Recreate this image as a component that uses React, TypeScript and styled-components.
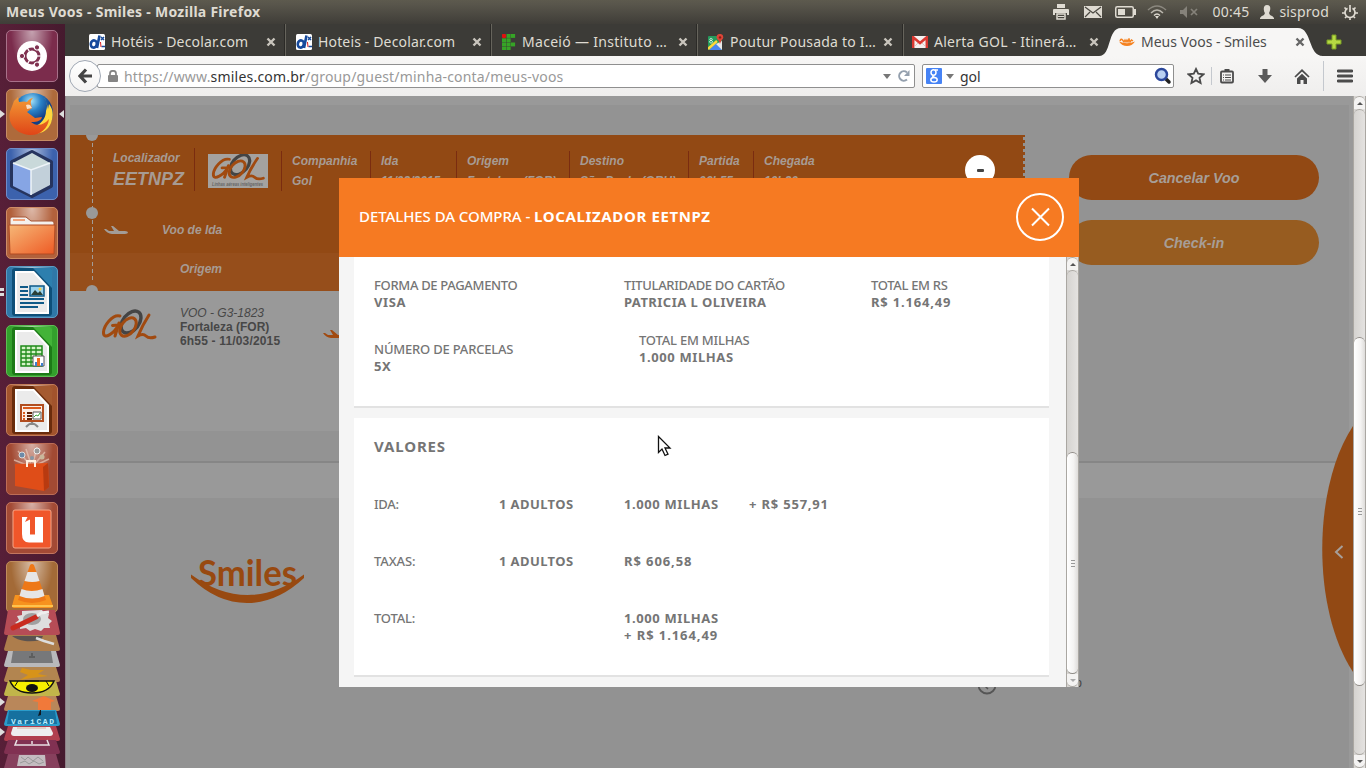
import React from "react";
import styled, { createGlobalStyle, css } from "styled-components";

const Global = createGlobalStyle`
  * { box-sizing: border-box; }
  body { margin: 0; overflow: hidden; }
  svg { display: block; flex: none; }
`;

const Desktop = styled.div`
  position: relative;
  width: 1366px;
  height: 768px;
  display: flex;
  flex-direction: column;
  overflow: hidden;
  background: #4d1b31;
  font-family: "Noto Sans", "Open Sans", sans-serif;
  white-space: nowrap;
`;

/* ---------- system panel ---------- */
const Panel = styled.header`
  height: 24px;
  flex: none;
  display: flex;
  align-items: center;
  padding: 0 8px 1px 6px;
  background: linear-gradient(#5d5a4e, #58554b 20%, #3f3d38);
  color: #dfdbd2;
  font-size: 14px;
`;
const PanelTitle = styled.span`
  flex: 1;
  padding-bottom: 1px;
  font-weight: 700;
  letter-spacing: 0.27px;
`;
const PanelIcon = styled.span<{ $gap: number }>`margin-right: ${p => p.$gap}px;`;
const PanelText = styled.span<{ $gap: number }>`
  margin-right: ${p => p.$gap}px;
  padding-bottom: 1px;
  letter-spacing: 0.2px;
`;

const Body = styled.div`
  flex: 1;
  display: flex;
  min-height: 0;
`;

/* ---------- launcher ---------- */
const Launcher = styled.nav`
  width: 65px;
  flex: none;
  display: flex;
  flex-direction: column;
  padding: 6px 0 0;
  background: linear-gradient(90deg, #571f38, #4d1b31 70%, #451a2e);
  overflow: hidden;
`;
const Tile = styled.div<{ $bg: string; $edge: string }>`
  position: relative;
  width: 52px;
  height: 52px;
  flex: none;
  margin: 0 0 7px 6px;
  border-radius: 5px;
  border: 1px solid ${p => p.$edge};
  background: radial-gradient(ellipse at 50% 0, #ffffff90, #ffffff00 60%), ${p => p.$bg};
`;
const TileSvg = styled.svg`margin: -1px;`;
const Arrow = styled.i<{ $side: "left" | "right" }>`
  position: absolute;
  top: 20px;
  ${p => (p.$side === "left" ? "left: -7px;" : "right: -7px;")}
  border: solid transparent;
  border-width: 4px 0;
  ${p => p.$side === "left" ? "border-left: 5px solid #ddd;" : "border-right: 5px solid #ddd;"}
`;
const DoubleMark = styled.i`
  position: absolute;
  left: -7px;
  top: 21px;
  width: 4px;
  height: 8px;
  border: solid #ddd;
  border-width: 3px 0;
`;
const FoldedStack = styled.div`
  position: relative;
  margin-top: -12px;
  flex: none;
`;

/* ---------- browser ---------- */
const Browser = styled.main`
  flex: 1;
  min-width: 0;
  display: flex;
  flex-direction: column;
`;
const TabStrip = styled.div`
  height: 32px;
  flex: none;
  display: flex;
  padding-left: 14px;
  background: #3c3b37;
`;
const Tab = styled.div<{ $w: number }>`
  position: relative;
  width: ${p => p.$w}px;
  height: 32px;
  display: flex;
  align-items: center;
  padding: 4px 0 0 10px;
  gap: 6px;
  color: #dfdbd2;
  font-size: 14px;
  border-right: 1px solid #66645c;
  box-shadow: inset -1px 0 #2b2a27;
`;
const LastTab = styled(Tab)`
  padding-left: 8px;
  border: 0;
  box-shadow: none;
`;
const ActiveTab = styled(Tab)`
  padding-left: 20px;
  border: 0;
  box-shadow: none;
  color: #4c4c4c;
`;
const TabShape = styled.svg`
  position: absolute;
  left: 0;
  top: 0;
`;
const TabLabel = styled.span<{ $ls: number }>`
  position: relative;
  flex: 1;
  line-height: 20px;
  letter-spacing: ${p => p.$ls}px;
`;
const TabIcon = styled.svg`position: relative;`;
const TabClose = styled.svg<{ $right?: number }>`
  position: relative;
  margin-right: ${p => p.$right ?? 9}px;
`;
const AddTab = styled.svg`margin: 10px 0 0 1px;`;
const Toolbar = styled.div`
  height: 40px;
  flex: none;
  display: flex;
  align-items: center;
  background: linear-gradient(#f7f6f5, #efeeed);
  color: #4c4c4c;
  font-size: 14px;
`;
const BackButton = styled.button`
  position: relative;
  z-index: 1;
  width: 32px;
  height: 32px;
  flex: none;
  display: grid;
  place-items: center;
  margin-left: 4px;
  padding: 0;
  border: 1px solid #a0a8b4;
  border-radius: 50%;
  background: linear-gradient(#fff, #f4f3f2);
`;
const Field = styled.div<{ $w: number; $pad: number; $left: number }>`
  width: ${p => p.$w}px;
  height: 24px;
  display: flex;
  align-items: center;
  margin-left: ${p => p.$left}px;
  padding-left: ${p => p.$pad}px;
  border: 1px solid #8f8f8f;
  border-radius: 2px;
  background: #fff;
`;
const Url = styled.span`
  flex: 1;
  margin-left: 6px;
  color: #999;
  letter-spacing: 0.18px;
  b { color: #333; font-weight: 400; letter-spacing: 0.2px; }
`;
const Query = styled.span`flex: 1; margin-left: 6px; color: #333;`;
const Tools = styled.div`
  flex: 1;
  display: flex;
  align-items: center;
  padding-left: 13px;
`;
const Rule = styled.i<{ $h: number; $l: number; $r: number }>`
  width: 1px;
  height: ${p => p.$h}px;
  margin: 0 ${p => p.$r}px 0 ${p => p.$l}px;
  background: #c4c8ce;
`;
const Spacer = styled.i<{ $w: number }>`width: ${p => p.$w}px;`;

/* ---------- page ---------- */
const Viewport = styled.div`
  flex: 1;
  display: flex;
  min-height: 0;
`;
const Page = styled.div`
  position: relative;
  width: 1288px;
  padding: 9px 4px 0;
  background: #999;
  border-left: 1px solid #8d7f86;
  overflow: hidden;
  font-family: "Liberation Sans", Arial, sans-serif;
`;
const Flights = styled.section`
  height: 358px;
  display: flex;
  align-items: flex-start;
  padding-top: 30px;
  background: #939393;
  border-bottom: 2px solid #868686;
`;
const FlightColumn = styled.div`width: 955px;`;
const Ticket = styled.div`
  position: relative;
  height: 156px;
  background: linear-gradient(#924914 118px, #964e1b 118px);
  color: #a79b93;
  font-size: 12px;
  font-weight: 700;
  font-style: italic;
  &::after {
    content: "";
    position: absolute;
    top: 2px;
    right: 0;
    bottom: 0;
    width: 2px;
    background: repeating-linear-gradient(#939393 0 3px, transparent 3px 6px);
  }
`;
const RouteLine = styled.svg`
  position: absolute;
  left: 16px;
  top: 0;
`;
const TicketHead = styled.div`
  height: 77px;
  display: flex;
  padding: 13px 0 0 43px;
  line-height: 20px;
`;
const Locator = styled.div`
  width: 82px;
  height: 43px;
  border-right: 1px solid #7a2c10;
  line-height: 20px;
  big { display: block; font-size: 18px; line-height: 22px; }
`;
const LogoCell = styled.div`
  width: 87px;
  height: 40px;
  margin-top: 3px;
  padding: 3px 0 0 13px;
  border-right: 1px solid #7a2c10;
`;
const HeadCell = styled.div<{ $w: number; $last?: boolean }>`
  width: ${p => p.$w}px;
  height: 40px;
  margin-top: 3px;
  padding-left: 10px;
  ${p => !p.$last && "border-right: 1px solid #7a2c10;"}
`;
const Minus = styled.div`
  width: 30px;
  height: 30px;
  margin: 7px 0 0 81px;
  display: grid;
  place-items: center;
  border-radius: 50%;
  background: #fff;
  i { width: 7px; height: 3px; border-radius: 1px; background: #444; }
`;
const Leg = styled.div`
  height: 41px;
  display: flex;
  align-items: flex-start;
  padding: 11px 0 0 34px;
  gap: 34px;
  line-height: 14px;
  svg { margin-top: 3px; }
`;
const LegHead = styled.div`
  height: 34px;
  padding: 0 0 0 110px;
  line-height: 32px;
`;
const FlightCard = styled.div`
  height: 140px;
  display: flex;
  padding: 15px 0 0 29px;
  background: #999;
  color: #474747;
  font-size: 12px;
  line-height: 14px;
  b, em { display: block; }
`;
const CardLogo = styled.div`margin-top: 3px;`;
const FlightInfo = styled.div`width: 145px; margin-left: 21px;`;
const Departure = styled.b`letter-spacing: 0.17px;`;
const PlaneSlot = styled.div`margin: 24px 0 0 -2px;`;
const Actions = styled.div`
  display: flex;
  flex-direction: column;
  gap: 20px;
  margin: 20px 0 0 44px;
`;
const Action = styled.button<{ $bg: string }>`
  width: 250px;
  height: 45px;
  border: 0;
  border-radius: 23px;
  background: ${p => p.$bg};
  color: #a79e97;
  font: italic 700 14.3px "Liberation Sans", sans-serif;
`;
const Footer = styled.footer`
  height: 270px;
  display: flex;
  align-items: flex-start;
  margin-top: 35px;
  padding-left: 120px;
  background: #929292;
  color: #444;
  font-size: 12px;
`;
const FooterLogo = styled.svg`margin-top: 56px;`;
const FooterNote = styled.div`
  display: flex;
  align-items: center;
  justify-content: space-between;
  width: 105px;
  margin: 177px 0 0 671px;
  line-height: 14px;
  span { padding-bottom: 5px; }
`;
const SideTab = styled.div`
  position: absolute;
  right: 0;
  top: 330px;
`;

const Track = styled.div`
  width: 13px;
  flex: none;
  display: flex;
  flex-direction: column;
  border: solid #aaa7a2;
  border-width: 0 1px;
  background: linear-gradient(90deg, #d5d3d0, #e4e2e0);
`;
const Step = styled.div<{ $dim?: boolean; $down?: boolean }>`
  height: 13px;
  flex: none;
  display: grid;
  place-items: center;
  border: 1px solid #aaa7a2;
  border-width: ${p => (p.$down ? "0 0 1px" : "1px 0 0")};
  border-radius: ${p => (p.$down ? "0 0 6px 6px" : "6px 6px 0 0")};
  background: #f4f3f2;
  i {
    border: solid transparent;
    border-width: 0 3px;
    ${p => p.$down
      ? css`border-top: 3px solid ${p.$dim ? "#aaa" : "#555"};`
      : "border-bottom: 3px solid #555;"}
  }
`;
const Groove = styled.div<{ $h: number; $top?: boolean }>`
  height: ${p => p.$h}px;
  border: 1px solid #aaa7a2;
  border-width: ${p => (p.$top ? "1px 0 0" : "0 0 1px")};
  border-radius: ${p => (p.$top ? "6px 6px 0 0" : "0 0 6px 6px")};
`;
const Thumb = styled.div`
  flex: 1;
  display: flex;
  flex-direction: column;
  align-items: center;
  justify-content: center;
  gap: 2px;
  border: solid #8f8c87;
  border-width: 1px 0;
  border-radius: 6px;
  background: linear-gradient(90deg, #fff, #f4f3f2 60%, #dedcda);
  i { width: 4px; height: 1px; background: #999; }
`;

/* ---------- dialog ---------- */
const Dialog = styled.section`
  position: absolute;
  left: 339px;
  top: 178px;
  width: 740px;
  height: 509px;
  display: flex;
  flex-direction: column;
  background: #f5f5f5;
`;
const DialogHead = styled.header`
  height: 79px;
  flex: none;
  display: flex;
  align-items: center;
  justify-content: space-between;
  padding: 0 15px 2px 20px;
  background: #f67a22;
  color: #fff;
  b { letter-spacing: 0.63px; }
`;
const DialogTitle = styled.h1`
  margin: 0;
  padding-bottom: 1px;
  font-size: 15px;
  font-weight: 500;
  letter-spacing: -0.07px;
`;
const DialogBody = styled.div`
  flex: 1;
  display: flex;
  justify-content: space-between;
  padding-left: 15px;
`;
const Cards = styled.div`
  width: 695px;
  display: flex;
  flex-direction: column;
  gap: 10px;
`;
const Card = styled.div<{ $h: number }>`
  height: ${p => p.$h}px;
  padding: 20px 20px 0;
  border-bottom: 2px solid #e2e2e2;
  background: #fff;
  color: #757575;
  font-size: 13px;
  line-height: 17px;
`;
const Grid = styled.div<{ $cols: string; $top: number }>`
  display: grid;
  grid-template-columns: ${p => p.$cols};
  padding-top: ${p => p.$top}px;
`;
const Pair = styled.div<{ $left?: number; $top?: number }>`
  padding: ${p => p.$top ?? 0}px 0 0 ${p => p.$left ?? 0}px;
`;
const Label = styled.div<{ $ls?: number }>`
  font-weight: 500;
  letter-spacing: ${p => p.$ls ?? -0.32}px;
`;
const Value = styled.div<{ $ls?: number }>`
  font-weight: 700;
  letter-spacing: ${p => p.$ls ?? 0.6}px;
`;
const CardTitle = styled.h2`
  margin: -1px 0 1px;
  font-size: 15px;
  line-height: 18px;
  letter-spacing: 0.85px;
`;
const Pointer = styled.svg`
  position: absolute;
  left: 657px;
  top: 435px;
`;

/* ---------- drawings ---------- */
const Cross = ({ color, right }: { color: string; right?: number }) => (
  <TabClose $right={right} width="10" height="10" viewBox="0 0 10 10">
    <path d="M1.500 1.500 8.500 8.500M8.500 1.500 1.500 8.500" stroke={color} strokeWidth="2.400" />
  </TabClose>
);

const Plane = ({ color }: { color: string }) => (
  <svg width="24" height="9" viewBox="0 0 24 9">
    <path fill={color} d="M0 3h2l3 2h5L7 0h2l6 5h6q3 .4 3 1.600T21 8H8Q3 7.600 0 3Z" />
  </svg>
);

const GolLogo = ({ w, h, boxed }: { w: number; h: number; boxed?: boolean }) => (
  <svg width={w} height={h} viewBox="0 0 60 34">
    {boxed && <rect width="60" height="34" fill="#a4a2a0" />}
    <g transform={boxed ? "translate(1 -1) scale(.97 .9)" : undefined}>
      <ellipse cx="32" cy="13" rx="8" ry="12.500" transform="rotate(38 32 13)" fill="none" stroke="#444" strokeWidth="3.400" />
      <g fill="none" stroke="#a14a10" strokeWidth="3" strokeLinecap="round">
        <path d="M21 7C13 5 5 17 4.500 23c-.5 9 11 1 15-7l-6 .5M20 14 16 27" />
        <ellipse cx="29" cy="18" rx="6.500" ry="10.500" transform="rotate(38 29 18)" />
        <path d="M50 6Q43 17 39 27q5-3 8 0t9 1" />
      </g>
    </g>
    {boxed && <text x="4" y="32" fontSize="5.500" fontWeight="700" textLength="51" lengthAdjust="spacingAndGlyphs" fill="#666" fontFamily="Liberation Sans">Linhas aéreas inteligentes</text>}
  </svg>
);

const Decolar = () => (
  <TabIcon width="16" height="16" viewBox="0 0 16 16">
    <rect width="16" height="16" rx="1.500" fill="#fff" />
    <ellipse cx="4.800" cy="10" rx="3" ry="3.600" fill="none" stroke="#174a9c" strokeWidth="2.600" transform="rotate(12 4.800 10)" />
    <path d="M10.500 1.500 8 14" stroke="#174a9c" strokeWidth="2.600" />
    <path d="m12 3 3 3m0-3-3 3M12.500 12.500H16" stroke="#174a9c" strokeWidth="1.500" />
    <path d="m11.500 8 .5 5" stroke="#d22" />
  </TabIcon>
);
const Instituto = () => (
  <TabIcon width="14" height="16" viewBox="0 0 14 16">
    {[[4.500, 0], [9, 0], [0, 4.300], [4.500, 4.300], [0, 8.500], [4.500, 8.500], [9, 8.500], [0, 12.700], [4.500, 12.700]].map(([x, y]) => (
      <rect key={`${x}-${y}`} x={x} y={y} width="4.100" height={y > 12 ? 3.300 : 3.900} fill="#36a426" />
    ))}
    <circle cx="2" cy="2" r="2.300" fill="#e01010" />
  </TabIcon>
);
const Maps = () => (
  <TabIcon width="16" height="16" viewBox="0 0 16 16">
    <rect y="2" width="14" height="14" rx="1" fill="#249a5c" />
    <path d="M1 16 8 9l6 7Z" fill="#4a86f0" />
    <path d="M0 15 9 7" stroke="#ffd83a" strokeWidth="2.500" />
    <path d="m8 10 6 6V7Z" fill="#e8e8e8" />
    <path d="M3 4.300a1.200 1.100 0 1 0 .1 0M3 6.600a1.500 1.200 0 1 0 .1 0" fill="none" stroke="#fff" strokeWidth=".8" />
    <path d="M12 10C11 6 8.500 5 8.500 3.200a3.300 3.200 0 0 1 6.800 0C15.300 5 13 6 12 10Z" fill="#dd4437" />
    <circle cx="12" cy="3.400" r="1.200" fill="#802018" />
  </TabIcon>
);
const Mail = () => (
  <TabIcon width="16" height="12" viewBox="0 0 16 12">
    <rect width="16" height="12" rx="1" fill="#f4f0ef" />
    <path d="M1.200 12V1.200L8 7l6.800-5.800V12" fill="none" stroke="#d93831" strokeWidth="2.500" />
    <path d="m2 11 4-4m8 4-4-4" stroke="#d8b0ac" strokeWidth="0.700" />
  </TabIcon>
);
const SmilesFav = () => (
  <TabIcon width="16" height="8" viewBox="0 0 16 8">
    <path d="M1 3q1-3 2.500-1L5 4l1-2 1 2 1-2 1 2 1-3 1 3 1.500-2L14 3" fill="none" stroke="#f58220" strokeWidth="1.400" />
    <path d="M0 3.500q8 3.500 16 0Q13 8 8 8T0 3.500Z" fill="#f58220" />
  </TabIcon>
);

const Doc = ({ dark, mid, children }: { dark: string; mid: string; children: React.ReactNode }) => (
  <TileSvg width="52" height="52" viewBox="0 0 52 52">
    <rect x="6" y="2" width="40" height="48" rx="3" fill={dark} />
    <path d="M27 2h17q2 0 2 2v18Z" fill={mid} />
    <path d="M9 5h19l15 16v27H9Z" fill="#fff" /><path d="M11 7h16l14 15v24H11Z" fill="#ebebeb" />
    {children}
  </TileSvg>
);

const Folded = () => (
  <svg width="65" height="160" viewBox="0 608 65 160">
    <path d="M8 610h47l5 23q0 2-2 2H6q-2 0-2-2Z" fill="#b64c56" />
    <path d="m22 611 20-1 2 3 5 1-1 4 4 3-3 3 1 4-6 0-3 3-6-2-5 2-4-3-6 1 0-4-5-2 4-3-2-4 5-1Z" fill="#dedede" />
    <ellipse cx="32" cy="619" rx="9" ry="6" fill="#a0a0a0" />
    <path d="m13 628 23-11" stroke="#c92c20" strokeWidth="5" strokeLinecap="round" />
    <path d="m37 616 4-3 8-1" stroke="#eee" strokeWidth="3" fill="none" />
    <path d="M8 635h48l4 14q0 2-2 2H6q-2 0-2-2Z" fill="#ad7d4c" />
    <path d="M12 636h31l-2 4q-9 2-16 1-8-1-13-5Z" fill="#5b5350" /><path d="m36 638 8 3 10 3" stroke="#ddd" strokeWidth="2.500" fill="none" />
    <path d="M8 651h48l4 14q0 2-2 2H6q-2 0-2-2Z" fill="#b9b9bb" /><path d="M13 651h38l2 12H11Z" fill="#77787a" />
    <path d="M32 653v3M29 657h6" stroke="#555" strokeWidth="1.500" />
    <path d="M8 667h48l4 13q0 2-2 2H6q-2 0-2-2Z" fill="#b28550" />
    <path d="m22 668 9 2 13 0-6 4 10 2-16 2-12 2 8-5-8-3Z" fill="#d79319" />
    <path d="M8 681h48l4 13q0 2-2 2H6q-2 0-2-2Z" fill="#c1b54a" />
    <path d="M10 681h44q-5 12-22 12T10 681Z" fill="#f7ef00" stroke="#111" strokeWidth="1.500" /><ellipse cx="32" cy="688" rx="6" ry="4" fill="#111" />
    <path d="M18 681l-3 5M46 681l3 5M25 681h14" stroke="#111" />
    <path d="M8 696h48l4 13q0 2-2 2H6q-2 0-2-2Z" fill="#b9875a" /><path d="m32 701 12-5 11 5-4 1v10H38v-10Z" fill="#f1793a" />
    <path d="M8 710h48l4 14q0 2-2 2H6q-2 0-2-2Z" fill="#2b9cca" /><path d="M9 711h46l2 13H7Z" fill="#16709f" />
    <path d="m40 710-2 6 3-1v-5" fill="#101820" />
    <text x="11" y="724" fontSize="8" fontWeight="700" textLength="43" fill="#b8ecff" fontFamily="Liberation Mono">VariCAD</text>
    <path d="M8 726h48l4 13q0 2-2 2H6q-2 0-2-2Z" fill="#b13f4e" /><path d="M13 727h37l3 6q0 3-3 3H14q-3 0-3-3Z" fill="#eee" /><path d="M17 728h29" stroke="#d9b0a0" />
    <path d="M8 740h48l4 12q0 2-2 2H6q-2 0-2-2Z" fill="#813152" /><path d="m17 740-2 5h34l-2-5M32 741v3" fill="none" stroke="#e8e0e4" strokeWidth="1.500" />
    <path d="M8 754h48l4 14H4Z" fill="#87405d" /><path d="M19 755h26l1 11H17Z" fill="#c4bcc0" />
    <path d="M21 757l4 3 3-3 5 4 5-4 5 4M20 763l5-2 4 3 5-3 5 3 5-2" fill="none" stroke="#999" />
    <path d="m0 698 5 4-5 4ZM0 728l5 4-5 4Z" fill="#ddd" />
  </svg>
);

const LauncherBar = () => (
  <Launcher>
    <Tile $bg="#7b2c4c" $edge="#a8718a">
      <TileSvg width="52" height="52" viewBox="0 0 52 52">
        <circle cx="26" cy="26" r="15" fill="#fff" />
        <circle cx="26" cy="26" r="7" fill="none" stroke="#7f3150" strokeWidth="3" />
        {[60, 180, 300].map(a => (
          <g key={a} transform={`rotate(${a} 26 26)`}>
            <path d="M31 26h6" stroke="#fff" strokeWidth="1.200" transform="rotate(60 26 26)" />
            <circle cx="36" cy="26" r="2.600" fill="#7f3150" stroke="#fff" />
          </g>
        ))}
      </TileSvg>
    </Tile>
    <Tile $bg="#ae6a3b" $edge="#c68c65">
      <Arrow $side="left" /><Arrow $side="right" />
      <TileSvg width="52" height="52" viewBox="0 0 52 52">
        <defs>
          <radialGradient id="globe" cx=".45" cy=".2"><stop offset="0" stopColor="#a5e4fa" /><stop offset=".5" stopColor="#2a82c8" /><stop offset="1" stopColor="#123f86" /></radialGradient>
          <linearGradient id="fox" x2="0" y2="1"><stop offset="0" stopColor="#f39a35" /><stop offset="1" stopColor="#df4517" /></linearGradient>
        </defs>
        <circle cx="27" cy="24" r="20" fill="url(#globe)" />
        <path d="M38 8c3 6 4 8 2 14 0 8-6 13-10 15l-9 4c8 7 20 3 24-7 3-8 2-14-2-19l-1 5q-1-7-4-12Z" fill="#ffd83d" />
        <path d="M8 12c2-2 3-3 4-4l1 5q5-1 8 0 3-4 6-4-3 3-2 6l1 4-5 4 8 6 7-1c-1 5-8 5-11 5 6 5 13 3 18-3-1 10-10 17-20 16C7 44 0 31 5 20Z" fill="url(#fox)" />
        <path d="M20 16q2-1 4 0l2 3-5 1Z" fill="#f9dfc7" />
      </TileSvg>
    </Tile>
    <Tile $bg="#3c62ad" $edge="#6f8cc9">
      <TileSvg width="52" height="52" viewBox="0 0 52 52">
        <path d="M26 4 45 14v24L26 48 6 38V14Z" fill="#aebfd4" stroke="#26345e" strokeWidth="4" strokeLinejoin="round" />
        <path d="M26 5 44 15 25 22 7 15Z" fill="#c9d9da" /><path d="M7 15l18 7v25L7 38Z" fill="#86a5e4" /><path d="m44 15-19 7v25l19-10Z" fill="#c2d0da" />
        <path d="M7 15l18 7 19-7M25 22v25" fill="none" stroke="#eef4f8" strokeWidth="1.500" />
      </TileSvg>
    </Tile>
    <Tile $bg="#b2613c" $edge="#cf8c66">
      <TileSvg width="52" height="52" viewBox="0 0 52 52">
        <defs><linearGradient id="folder" x2="1" y2="1"><stop offset="0" stopColor="#f6b777" /><stop offset="1" stopColor="#ee5a24" /></linearGradient></defs>
        <path d="M4 20v-8q0-2 2-2h14l5 4h21q2 0 2 2v4Z" fill="#f4f1ee" stroke="#a65434" />
        <path d="M7 13h12" stroke="#f0a27a" strokeWidth="2" />
        <path d="M3 18h46l-1 29H4Z" fill="url(#folder)" stroke="#b24a22" />
      </TileSvg>
    </Tile>
    <Tile $bg="#2f77a7" $edge="#5b9cc4">
      <DoubleMark />
      <Doc dark="#0e4f78" mid="#2d7fae">
        <path d="M14 21h8M14 25h8M14 29h8M14 33h24M14 37h24M14 41h18" stroke="#0f5a88" strokeWidth="2" />
        <path d="M24 20h14v10H24Z" fill="#9bd3ee" stroke="#0f5a88" strokeWidth="1.500" /><path d="m25 29 4-5 3 3 2-2 3 4Z" fill="#2a3f36" /><circle cx="34" cy="23" r="1.500" fill="#ffcf3e" />
      </Doc>
    </Tile>
    <Tile $bg="#33a02c" $edge="#5fbd55">
      <Doc dark="#1d7a17" mid="#43b338">
        <path d="M15 21h21v20H15Z" fill="#d6f2c8" stroke="#1f8a1a" strokeWidth="1.500" /><path d="M15 25h21M15 29h21M15 33h21M15 37h21M20 21v20M25 21v20M30 21v20" stroke="#1f8a1a" strokeWidth="1.300" />
        <path d="M27 31h11v10H27Z" fill="#fff" stroke="#555" /><path d="M29 41v-4h2v4M35 41v-3h2v3" fill="#3e7fd0" /><path d="M31 41v-8h3v8" fill="#ef6a1f" />
      </Doc>
    </Tile>
    <Tile $bg="#a2532c" $edge="#c27c58">
      <Doc dark="#6a2c0c" mid="#a55a30">
        <path d="M15 21h22v16H15Z" fill="#fbeee6" stroke="#b14d1f" strokeWidth="2" /><path d="M17 24h18M17 29h2M17 32h2M17 35h2" stroke="#d9591c" strokeWidth="2" /><path d="M21 29h5M21 32h5M21 35h5" stroke="#5d2107" strokeWidth="2" />
        <path d="M27 28h8v7h-8Z" fill="#fff" stroke="#555" /><path d="m28 33 2-2 2 1 2-3" fill="none" stroke="#3aa63a" /><path d="M20 43q6-7 12 0M26 38v3" fill="none" stroke="#888" strokeWidth="2" />
      </Doc>
    </Tile>
    <Tile $bg="#a24a33" $edge="#bd6d56">
      <TileSvg width="52" height="52" viewBox="0 0 52 52">
        <path d="m26 24-18-7M26 24 12 8M26 24 20 6M26 24 31 4M26 24 39 9M26 24l17-8" stroke="#e8c9ba" strokeWidth="1.500" opacity=".7" />
        <circle cx="16" cy="12" r="3" fill="#6c8aa8" stroke="#ddd" /><circle cx="31" cy="8" r="3" fill="#999" stroke="#eee" /><circle cx="36" cy="14" r="2.500" fill="#c9b89c" /><circle cx="26" cy="15" r="2" fill="#8797a5" />
        <path d="m9 21 33-1 1 24-5 4-29-5Z" fill="#df4d18" /><path d="m37 24 5-4 1 24-5 4Z" fill="#b83a10" /><path d="M21 24v-6h8v6" fill="none" stroke="#fff0df" strokeWidth="2" />
      </TileSvg>
    </Tile>
    <Tile $bg="#a34a35" $edge="#c4765f">
      <TileSvg width="52" height="52" viewBox="0 0 52 52">
        <rect x="7" y="8" width="38" height="38" rx="2" fill="#f0562a" stroke="#f5a688" />
        <path d="M20 15v17q0 4.500 3 4.500h10V15" fill="none" stroke="#fff" strokeWidth="8" /><path d="m19 20 6-3v-3h-3Z" fill="#f0562a" />
      </TileSvg>
    </Tile>
    <Tile $bg="#a36a37" $edge="#c08c5c">
      <TileSvg width="52" height="52" viewBox="0 0 52 52">
        <path d="M9 34h34l4 11q0 2-2 2H8q-2 0-2-2Z" fill="#f6921e" />
        <path d="m24 4q2-2 4 0l12 35q-14 6-28 0Z" fill="#ee7817" /><path d="m21.500 11h9l3 9q-7 2-15 0ZM15.500 28q10 4 21 0l2 7q-12 5-25 0Z" fill="#e6e6e6" />
        <path d="M6 45h41" stroke="#ffc34c" strokeWidth="2" />
      </TileSvg>
    </Tile>
    <FoldedStack><Folded /></FoldedStack>
  </Launcher>
);

const SYS = "#dfdbd2";
const ink = "#4b4b4b";

export default function App() {
  return (
    <Desktop>
      <Global />
      <Panel>
        <PanelTitle>Meus Voos - Smiles - Mozilla Firefox</PanelTitle>
        <PanelIcon $gap={15}><svg width="16" height="16" viewBox="0 0 16 16"><path d="M4 0h8v4H4ZM1 5h14q1 0 1 1v5h-2V9H2v2H0V6q0-1 1-1Z" fill={SYS} /><path d="M4 10h8v5H4Z" fill="none" stroke={SYS} strokeWidth="1.500" /><path d="M5 12.500h6" stroke={SYS} /></svg></PanelIcon>
        <PanelIcon $gap={13}><svg width="18" height="12" viewBox="0 0 18 12"><rect width="18" height="12" fill={SYS} /><path d="m1 1 8 6 8-6M1 11l5-5M17 11l-5-5" fill="none" stroke="#4a4841" strokeWidth="1.200" /></svg></PanelIcon>
        <PanelIcon $gap={11}><svg width="21" height="12" viewBox="0 0 21 12"><rect x=".75" y=".75" width="17.500" height="10.500" rx="1.500" fill="none" stroke={SYS} strokeWidth="1.500" /><path d="M3 3h7v6H3ZM19 3h2v6h-2Z" fill={SYS} /></svg></PanelIcon>
        <PanelIcon $gap={13}><svg width="20" height="14" viewBox="0 0 20 14" fill="none" strokeWidth="1.500"><path d="M1 5q9-8 18 0" stroke="#8b887f" /><path d="M4 8q6-6 12 0" stroke={SYS} opacity=".75" /><path d="M7 10.500q3-3 6 0" stroke={SYS} /><path d="m8 11 2 3 2-3Z" fill={SYS} /></svg></PanelIcon>
        <PanelIcon $gap={15}><svg width="18" height="12" viewBox="0 0 18 12"><path d="M0 4h3l4-4v12L3 8H0Z" fill="#85827a" /><path d="m11 3 6 6m0-6-6 6" stroke="#85827a" strokeWidth="1.700" /></svg></PanelIcon>
        <PanelText $gap={11}>00:45</PanelText>
        <PanelIcon $gap={5}><svg width="14" height="14" viewBox="0 0 14 14"><path d="M7 0c3 0 3.500 2 3.200 4.500Q9.500 7.500 9 8l1 2q3 1 4 3v1H0v-1q1-2 4-3l1-2Q4 7 3.800 4.500 3.500 0 7 0Z" fill={SYS} /></svg></PanelIcon>
        <PanelText $gap={13}>sisprod</PanelText>
        <svg width="16" height="16" viewBox="0 0 16 16" fill="none" stroke={SYS} strokeWidth="1.700"><path d="M5.500 4.200A5 5 0 1 0 10.500 4.200M8 1v7M2.500 3.500 4 5M13.500 3.500 12 5M0 9h3M13 9h3M3 14l1.500-1.500M13 14l-1.500-1.500M8 13v3" /></svg>
      </Panel>
      <Body>
        <LauncherBar />
        <Browser>
          <TabStrip>
            <Tab $w={207}><Decolar /><TabLabel $ls={0.15}>Hotéis - Decolar.com</TabLabel><Cross color="#c9c5bd" /></Tab>
            <Tab $w={206}><Decolar /><TabLabel $ls={0.15}>Hoteis - Decolar.com</TabLabel><Cross color="#c9c5bd" /></Tab>
            <Tab $w={206}><Instituto /><TabLabel $ls={0.3}>Maceió — Instituto …</TabLabel><Cross color="#c9c5bd" /></Tab>
            <Tab $w={206}><Maps /><TabLabel $ls={0.2}>Poutur Pousada to I…</TabLabel><Cross color="#c9c5bd" right={10} /></Tab>
            <LastTab $w={195}><Mail /><TabLabel $ls={0.25}>Alerta GOL - Itinerá…</TabLabel><Cross color="#c9c5bd" right={0} /></LastTab>
            <ActiveTab $w={226}>
              <TabShape width="226" height="32" viewBox="0 0 226 32"><path d="M0 32C13 32 8 4 22 4H199c14 0 10 28 25 28Z" fill="#f7f6f5" /></TabShape>
              <SmilesFav /><TabLabel $ls={0}>Meus Voos - Smiles</TabLabel><Cross color="#666" right={20} />
            </ActiveTab>
            <AddTab width="16" height="16" viewBox="0 0 16 16"><path d="M6 1h4v5h5v4h-5v5H6v-5H1V6h5Z" fill="#b6d943" stroke="#7b9f25" /></AddTab>
          </TabStrip>
          <Toolbar>
            <BackButton><svg width="14" height="16" viewBox="0 0 14 16"><path d="M8 1.500 2 8l6 6.500M2 8h12" fill="none" stroke="#454545" strokeWidth="3.200" /></svg></BackButton>
            <Field $w={818} $pad={10} $left={-4}>
              <svg width="10" height="12" viewBox="0 0 10 12"><path d="M2 6V3.500a3 2.700 0 0 1 6 0V6" fill="none" stroke="#858585" strokeWidth="1.700" /><rect y="5" width="10" height="7" rx="1" fill="#858585" /></svg>
              <Url>https://www.<b>smiles.com.br</b>/group/guest/minha-conta/meus-voos</Url>
              <svg width="8" height="5" viewBox="0 0 8 5"><path d="M0 0h8L4 5Z" fill="#777" /></svg>
              <Spacer $w={7} />
              <svg width="12" height="12" viewBox="0 0 12 12"><path d="M9 9.500A4.700 4.700 0 1 1 9 2.500" fill="none" stroke="#94a0ae" strokeWidth="2" /><path d="M11.500 0v6H6Z" fill="#94a0ae" /></svg>
              <Spacer $w={4} />
            </Field>
            <Field $w={252} $pad={3} $left={7}>
              <svg width="16" height="16" viewBox="0 0 16 16"><rect width="16" height="16" rx="1" fill="#4683f5" /><g fill="none" stroke="#fff" strokeWidth="1.500"><ellipse cx="7.500" cy="4.500" rx="2.500" ry="2.700" /><ellipse cx="8" cy="11.800" rx="3.200" ry="2.300" /><path d="M7 7.500q-1 1 1.500 2M9 2h3" /></g></svg>
              <Spacer $w={4} />
              <svg width="8" height="5" viewBox="0 0 8 5"><path d="M0 0h8L4 5Z" fill="#777" /></svg>
              <Query>gol</Query>
              <svg width="18" height="18" viewBox="0 0 18 18"><path d="m11 11 4 4" stroke="#222" strokeWidth="3.500" strokeLinecap="round" /><circle cx="7.500" cy="7.500" r="5.500" fill="#b9d0f2" stroke="#2b479b" strokeWidth="2.500" /></svg>
              <Spacer $w={1} />
            </Field>
            <Tools>
              <svg width="18" height="18" viewBox="0 0 18 18"><path d="m9 2 2.200 4.700 5.300.6-4 3.500 1.100 5.200L9 13.400 4.400 16l1.100-5.200-4-3.500 5.300-.6Z" fill="none" stroke={ink} strokeWidth="1.800" /></svg>
              <Rule $h={18} $l={6} $r={8} />
              <svg width="14" height="16" viewBox="0 0 14 16"><rect x="1" y="3.500" width="12" height="11" rx="1" fill="#f4f3f2" stroke={ink} strokeWidth="1.800" /><path d="M4.500 1h5v3h-5Z" fill={ink} /><path d="M3 7h1M5 7h6M3 9.500h1M5 9.500h6M3 12h1M5 12h6" stroke={ink} /></svg>
              <Spacer $w={24} />
              <svg width="14" height="14" viewBox="0 0 14 14"><path d="M4.500 0h5v6H14l-7 8-7-8h4.500Z" fill="#5a5a5a" /></svg>
              <Spacer $w={22} />
              <svg width="16" height="15" viewBox="0 0 16 15"><path d="M1 8 8 1.300 15 8" fill="none" stroke={ink} strokeWidth="1.700" /><path d="m3 9.500 5-4.700 5 4.700V15H9.500v-4h-3v4H3Z" fill={ink} /></svg>
              <Rule $h={30} $l={13} $r={13} />
              <svg width="16" height="14" viewBox="0 0 16 14"><path d="M1 2h14M1 7h14M1 12h14" stroke={ink} strokeWidth="2.800" strokeLinecap="round" /></svg>
            </Tools>
          </Toolbar>
          <Viewport>
            <Page>
              <Flights>
                <FlightColumn>
                  <Ticket>
                    <RouteLine width="12" height="156" viewBox="0 0 12 156">
                      <path d="M6.500 8v140" stroke="#a39d98" strokeDasharray="4 3" /><circle cx="6" cy="0" r="6" fill="#999" /><circle cx="6" cy="78" r="6" fill="#999" /><circle cx="6" cy="156" r="6" fill="#999" />
                    </RouteLine>
                    <TicketHead>
                      <Locator>Localizador<big>EETNPZ</big></Locator>
                      <LogoCell><GolLogo w={60} h={34} boxed /></LogoCell>
                      <HeadCell $w={89}>Companhia<br />Gol</HeadCell>
                      <HeadCell $w={86}>Ida<br />11/03/2015</HeadCell>
                      <HeadCell $w={113}>Origem<br />Fortaleza (FOR)</HeadCell>
                      <HeadCell $w={119}>Destino<br />São Paulo (GRU)</HeadCell>
                      <HeadCell $w={65}>Partida<br />06h55</HeadCell>
                      <HeadCell $w={130} $last>Chegada<br />10h30</HeadCell>
                      <Minus><i /></Minus>
                    </TicketHead>
                    <Leg><Plane color="#a39d98" />Voo de Ida</Leg>
                    <LegHead>Origem</LegHead>
                  </Ticket>
                  <FlightCard>
                    <CardLogo><GolLogo w={60} h={34} /></CardLogo>
                    <FlightInfo><em>VOO - G3-1823</em><b>Fortaleza (FOR)</b><Departure>6h55 - 11/03/2015</Departure></FlightInfo>
                    <PlaneSlot><Plane color="#a14a10" /></PlaneSlot>
                  </FlightCard>
                </FlightColumn>
                <Actions>
                  <Action $bg="#924914">Cancelar Voo</Action>
                  <Action $bg="#975c20">Check-in</Action>
                </Actions>
              </Flights>
              <Footer>
                <FooterLogo width="116" height="52" viewBox="0 0 116 52">
                  <text x="8" y="32" fontFamily="Lato" fontSize="37" fontWeight="700" textLength="99" lengthAdjust="spacingAndGlyphs" fill="#984910">Smiles</text>
                  <path d="M1 20.500Q29 41 57.500 41T114 20.500V24Q87 49 57 49T1 24Z" fill="#984910" />
                </FooterLogo>
                <FooterNote>
                  <svg width="20" height="20" viewBox="0 0 20 20"><circle cx="10" cy="10" r="8.500" fill="none" stroke="#555" strokeWidth="1.800" /><path d="m8 11 3 3" stroke="#555" strokeWidth="1.500" /></svg>
                  <span>o</span>
                </FooterNote>
              </Footer>
              <SideTab><svg width="31" height="246" viewBox="0 0 31 246"><path d="M31 0C-10 62-10 184 31 246Z" fill="#924914" /><path d="m20.500 120-6.500 6 6.500 6" fill="none" stroke="#a69f9a" strokeWidth="2" /></svg></SideTab>
            </Page>
            <Track>
              <Step><i /></Step>
              <Groove $h={228} $top />
              <Thumb><i /><i /><i /></Thumb>
              <Groove $h={69} />
              <Step $down><i /></Step>
            </Track>
          </Viewport>
        </Browser>
      </Body>
      <Dialog>
        <DialogHead>
          <DialogTitle>DETALHES DA COMPRA - <b>LOCALIZADOR EETNPZ</b></DialogTitle>
          <svg width="48" height="48" viewBox="0 0 48 48" fill="none" stroke="#fff"><circle cx="24" cy="24" r="23" strokeWidth="2" /><path d="m16 15.500 17 17m0-17-17 17" strokeWidth="2" /></svg>
        </DialogHead>
        <DialogBody>
          <Cards>
            <Card $h={151}>
              <Grid $cols="250px 247px 1fr" $top={0}>
                <Pair><Label>FORMA DE PAGAMENTO</Label><Value>VISA</Value></Pair>
                <Pair><Label>TITULARIDADE DO CARTÃO</Label><Value $ls={0.45}>PATRICIA L OLIVEIRA</Value></Pair>
                <Pair><Label>TOTAL EM RS</Label><Value $ls={0.8}>R$ 1.164,49</Value></Pair>
              </Grid>
              <Grid $cols="250px 1fr" $top={21}>
                <Pair $top={9}><Label $ls={-0.2}>NÚMERO DE PARCELAS</Label><Value>5X</Value></Pair>
                <Pair $left={15}><Label $ls={-0.2}>TOTAL EM MILHAS</Label><Value>1.000 MILHAS</Value></Pair>
              </Grid>
            </Card>
            <Card $h={259}>
              <CardTitle>VALORES</CardTitle>
              <Grid $cols="125px 125px 125px 1fr" $top={40}>
                <Label>IDA:</Label><Value $ls={0.4}>1 ADULTOS</Value><Value>1.000 MILHAS</Value><Value $ls={0.8}>+ R$ 557,91</Value>
              </Grid>
              <Grid $cols="125px 125px 125px 1fr" $top={40}>
                <Label $ls={-0.1}>TAXAS:</Label><Value $ls={0.4}>1 ADULTOS</Value><Value $ls={0.9}>R$ 606,58</Value>
              </Grid>
              <Grid $cols="250px 1fr" $top={40}>
                <Label $ls={-0.2}>TOTAL:</Label>
                <div><Value>1.000 MILHAS</Value><Value $ls={0.93}>+ R$ 1.164,49</Value></div>
              </Grid>
            </Card>
          </Cards>
          <Track>
            <Step><i /></Step>
            <Groove $h={182} $top />
            <Thumb><i /><i /><i /></Thumb>
            <Step $down $dim><i /></Step>
          </Track>
        </DialogBody>
      </Dialog>
      <Pointer width="15" height="22" viewBox="0 0 15 22"><path d="M1.500 1.500v16l3.500-3.500 3 6.500 3-1.300-3-6.200h5Z" fill="#fff" stroke="#111" strokeWidth="1.300" /></Pointer>
    </Desktop>
  );
}
